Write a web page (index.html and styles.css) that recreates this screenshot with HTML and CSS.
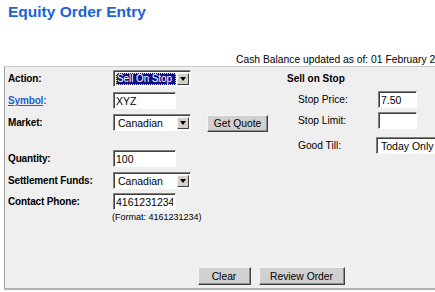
FILE: index.html
```html
<!DOCTYPE html>
<html>
<head>
<meta charset="utf-8">
<title>Equity Order Entry</title>
<link rel="stylesheet" href="styles.css">
</head>
<body>
<div class="page">
  <h1 class="title">Equity Order Entry</h1>
  <div class="balance">Cash Balance updated as of: 01 February 2005</div>
  <form class="panel">
    <div class="columns">
      <div class="left">
        <div class="row">
          <span class="label">Action:</span>
          <div class="select w78 focused"><span class="value">Sell On Stop</span><span class="arrow"></span></div>
        </div>
        <div class="row gap5">
          <span class="label link"><a href="#">Symbol</a>:</span>
          <input class="field" type="text" value="XYZ">
        </div>
        <div class="row gap5">
          <span class="label">Market:</span>
          <div class="select w78"><span class="value">Canadian</span><span class="arrow"></span></div>
          <button class="btn quote" type="button">Get Quote</button>
        </div>
        <div class="row gap19">
          <span class="label">Quantity:</span>
          <input class="field" type="text" value="100">
        </div>
        <div class="row gap5">
          <span class="label">Settlement Funds:</span>
          <div class="select w78"><span class="value">Canadian</span><span class="arrow"></span></div>
        </div>
        <div class="row gap4">
          <span class="label">Contact Phone:</span>
          <input class="field" type="text" value="4161231234">
        </div>
        <div class="hint">(Format: 4161231234)</div>
      </div>
      <div class="right">
        <div class="row heading">Sell on Stop</div>
        <div class="row gap4">
          <span class="rlabel">Stop Price:</span>
          <input class="field small" type="text" value="7.50">
        </div>
        <div class="row gap4">
          <span class="rlabel">Stop Limit:</span>
          <input class="field small" type="text" value="">
        </div>
        <div class="row gap8">
          <span class="rlabel narrow">Good Till:</span>
          <div class="select w120"><span class="value">Today Only</span><span class="arrow"></span></div>
        </div>
      </div>
    </div>
    <div class="actions">
      <button class="btn clear" type="button">Clear</button>
      <button class="btn review" type="button">Review Order</button>
    </div>
  </form>
</div>
</body>
</html>
```

FILE: styles.css
```css
* { box-sizing: border-box; }

html, body {
  margin: 0;
  padding: 0;
  background: #ffffff;
  overflow: hidden;
}

body {
  width: 435px;
  height: 292px;
  font-family: "Liberation Sans", Arial, sans-serif;
  color: #000;
}

.page {
  width: 560px;
}

.title {
  margin: 0;
  padding: 3px 0 0 8px;
  font-size: 15.5px;
  line-height: 18px;
  font-weight: bold;
  color: #1b63d3;
}

.balance {
  margin-top: 33px;
  padding-left: 236px;
  height: 12px;
  font-size: 10.3px;
  line-height: 12px;
  white-space: nowrap;
}

.panel {
  margin: 0 0 0 4px;
  width: 534px;
  height: 224px;
  display: flex;
  flex-direction: column;
  background: #efefef;
  border-top: 1px solid #c8c8c8;
  border-left: 1px solid #9c9c9c;
  border-right: 1px solid #9c9c9c;
  border-bottom: 2px solid #b4b4b4;
  padding: 3px 0 3px 0;
}

.columns {
  display: flex;
  padding-left: 3px;
}

.left {
  width: 279px;
  flex: none;
}

.right {
  flex: none;
}

.row {
  display: flex;
  align-items: center;
  height: 17px;
}

.gap4 { margin-top: 4px; }
.gap5 { margin-top: 5px; }
.gap8 { margin-top: 8px; }
.gap19 { margin-top: 19px; }

.label {
  width: 105px;
  flex: none;
  font-size: 10px;
  font-weight: bold;
  letter-spacing: -0.15px;
  white-space: nowrap;
}

.link,
.link a {
  color: #1b5fd0;
}

.link a {
  text-decoration: underline;
}

.select {
  display: flex;
  align-items: center;
  height: 17px;
  background: #fff;
  border: 1px solid;
  border-color: #808080 #ffffff #ffffff #808080;
  box-shadow: inset 1px 1px 0 #404040;
  padding: 2px 1px 1px 2px;
  flex: none;
}

.w78 { width: 78px; }
.w120 { width: 120px; }

.select .value {
  flex: 1;
  min-width: 0;
  height: 12px;
  font-size: 10.5px;
  line-height: 12px;
  padding-left: 2px;
  white-space: nowrap;
  overflow: hidden;
}

.select.focused .value {
  background: #0e0e86;
  color: #fff;
  outline: 1px dotted #e8e890;
  outline-offset: -1px;
  margin-right: 1px;
  padding-left: 1px;
  font-size: 10px;
  letter-spacing: -0.1px;
}

.arrow {
  flex: none;
  width: 12px;
  height: 12px;
  display: flex;
  align-items: center;
  justify-content: center;
  background: #d4d0c8;
  border: 1px solid;
  border-color: #f4f4f4 #404040 #404040 #f4f4f4;
}

.arrow::after {
  content: "";
  width: 0;
  height: 0;
  border-left: 3.5px solid transparent;
  border-right: 3.5px solid transparent;
  border-top: 4px solid #000;
}

.field {
  flex: none;
  width: 63px;
  height: 17px;
  margin: 0;
  padding: 0 2px;
  background: #fff;
  border: 1px solid;
  border-color: #808080 #ffffff #ffffff #808080;
  box-shadow: inset 1px 1px 0 #404040;
  font-family: "Liberation Sans", Arial, sans-serif;
  font-size: 10.5px;
  color: #000;
  outline: none;
}

.field.small {
  width: 39px;
}

.btn {
  height: 17px;
  margin: 0;
  padding: 0;
  background: #d0d0d0;
  border: 1px solid;
  border-color: #f6f6f6 #404040 #404040 #f6f6f6;
  box-shadow: inset -1px -1px 0 #8a8a8a;
  font-family: "Liberation Sans", Arial, sans-serif;
  font-size: 10.3px;
  color: #000;
}

.quote {
  width: 61px;
  margin-left: 16px;
  margin-top: 2px;
}

.hint {
  margin-top: 2px;
  padding-left: 104px;
  font-size: 9px;
  line-height: 11px;
  white-space: nowrap;
}

.heading {
  font-size: 10px;
  font-weight: bold;
  white-space: nowrap;
}

.rlabel {
  width: 91px;
  flex: none;
  padding-left: 11px;
  font-size: 10.2px;
  white-space: nowrap;
}

.rlabel.narrow {
  width: 89px;
}

.actions {
  margin-top: auto;
  display: flex;
  justify-content: center;
  gap: 8px;
}

.actions .btn {
  height: 18px;
}

.clear { width: 53px; }
.review { width: 86px; }
```
